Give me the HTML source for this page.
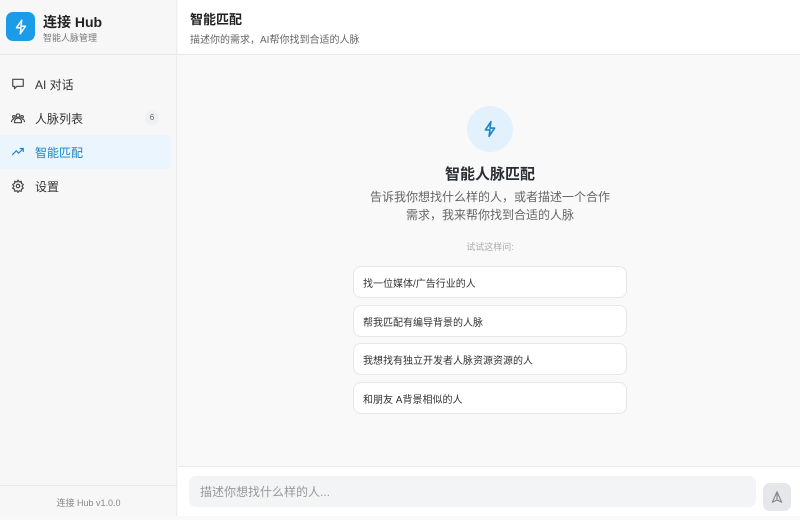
<!DOCTYPE html>
<html><head><meta charset="utf-8"><style>
*{margin:0;padding:0;box-sizing:border-box}
body{width:800px;height:516px;overflow:hidden;font-family:"Liberation Sans","Noto Sans CJK SC",sans-serif;background:#f9f9fa;position:relative;color:#1f2328}
.side{position:absolute;left:0;top:0;width:177px;height:516px;background:#f7f7f8;border-right:1px solid #ececee}
.logo{position:absolute;left:6px;top:12px;width:29px;height:29px;border-radius:7px;background:#1a9ce8;display:flex;align-items:center;justify-content:center}
.brand{position:absolute;left:43px;top:12px;font-size:14px;font-weight:bold;color:#222}
.brandsub{position:absolute;left:43px;top:31px;font-size:9px;color:#777}
.sep{position:absolute;left:0;top:54px;width:800px;height:1px;background:#e8e8ea}
.nav{position:absolute;left:0;width:171px;height:34px;display:flex;align-items:center;font-size:12px;color:#333}
.nav svg{position:absolute;left:11px}
.nav span{position:absolute;left:35px}
.nav.act{background:#eaf5fd;color:#1c86c8}
.badge{position:absolute;left:145px;width:14px;height:14px;border-radius:7px;background:#eef0f2;font-size:8px;color:#666;text-align:center;line-height:14px}
.ver{position:absolute;left:0;top:485px;width:177px;height:31px;border-top:1px solid #e8e8ea;text-align:center;font-size:9px;color:#888;line-height:34px}
.hdr{position:absolute;left:178px;top:0;width:622px;height:54px;background:#fff}
.ht{position:absolute;left:190px;top:9px;font-size:13px;font-weight:bold;color:#222}
.hs{position:absolute;left:190px;top:31px;font-size:10px;color:#666}
.circ{position:absolute;left:467px;top:106px;width:46px;height:46px;border-radius:50%;background:#e3f1fc;display:flex;align-items:center;justify-content:center}
.t1{position:absolute;left:340px;width:300px;text-align:center;top:163px;font-size:15px;font-weight:bold;color:#2a2d31}
.t2{position:absolute;left:365px;width:250px;text-align:center;top:188px;font-size:12px;line-height:18px;color:#666}
.t3{position:absolute;left:340px;width:300px;text-align:center;top:240px;font-size:9px;color:#aaa}
.card{position:absolute;left:353px;width:274px;height:32px;background:#fff;border:1px solid #e6e7e9;border-radius:8px;font-size:10px;color:#333;padding-left:9px;display:flex;align-items:center}
.bottom{position:absolute;left:178px;top:466px;width:622px;height:50px;background:#fff;border-top:1px solid #ececee}
.inp{position:absolute;left:189px;top:476px;width:567px;height:31px;background:#f3f4f6;border-radius:7px;font-size:12px;color:#999;padding-left:11px;display:flex;align-items:center}
.send{position:absolute;left:763px;top:483px;width:28px;height:28px;border-radius:7px;background:#e5e7ea;display:flex;align-items:center;justify-content:center}
</style></head><body>
<div class="side"></div>
<div class="hdr"></div>
<div class="logo"><svg width="18" height="18" viewBox="0 0 24 24" fill="none" stroke="#fff" stroke-width="2" stroke-linejoin="round"><path d="M13 3L6 13H12L11 21L18 11H12Z"/></svg></div>
<div class="brand">连接 Hub</div>
<div class="brandsub">智能人脉管理</div>
<div class="sep"></div>
<div class="nav" style="top:67px"><svg width="14" height="14" viewBox="0 0 24 24" fill="none" stroke="#444" stroke-width="2" stroke-linejoin="round"><path d="M3 4h18v12H10l-4 4v-4H3z"/><path d="M8 10h.01M12 10h.01M16 10h.01"/></svg><span>AI 对话</span></div>
<div class="nav" style="top:101px"><svg width="14" height="14" viewBox="0 0 24 24" fill="none" stroke="#444" stroke-width="2"><circle cx="12" cy="8" r="3"/><circle cx="5" cy="10" r="2.2"/><circle cx="19" cy="10" r="2.2"/><path d="M6 20v-2a6 6 0 0112 0v2zM1 19v-1a4 4 0 014-4M23 19v-1a4 4 0 00-4-4"/></svg><span>人脉列表</span><div class="badge">6</div></div>
<div class="nav act" style="top:135px"><svg width="14" height="14" viewBox="0 0 24 24" fill="none" stroke="#1c86c8" stroke-width="2"><path d="M2 17l7-7 4 4 8-8M15 6h6v6"/></svg><span>智能匹配</span></div>
<div class="nav" style="top:169px"><svg width="14" height="14" viewBox="0 0 24 24" fill="none" stroke="#444" stroke-width="2"><circle cx="12" cy="12" r="3"/><path d="M12 2l2 3 3.5-1 .5 3.5 3 2-2 3 2 3-3 2-.5 3.5-3.5-1-2 3-2-3-3.5 1L6 17.5l-3-2 2-3-2-3 3-2L6.5 4 10 5z"/></svg><span>设置</span></div>
<div class="ver">连接 Hub v1.0.0</div>
<div class="ht">智能匹配</div>
<div class="hs">描述你的需求，AI帮你找到合适的人脉</div>
<div class="circ"><svg width="22" height="22" viewBox="0 0 24 24" fill="none" stroke="#1c86c8" stroke-width="1.8" stroke-linejoin="round"><path d="M13 4L7 13H12L11 20L17 11H12Z"/></svg></div>
<div class="t1">智能人脉匹配</div>
<div class="t2">告诉我你想找什么样的人，或者描述一个合作<br>需求，我来帮你找到合适的人脉</div>
<div class="t3">试试这样问:</div>
<div class="card" style="top:266px">找一位媒体/广告行业的人</div>
<div class="card" style="top:305px">帮我匹配有编导背景的人脉</div>
<div class="card" style="top:343px">我想找有独立开发者人脉资源资源的人</div>
<div class="card" style="top:382px">和朋友 A背景相似的人</div>
<div class="bottom"></div>
<div class="inp">描述你想找什么样的人...</div>
<div class="send"><svg width="14" height="14" viewBox="0 0 24 24" fill="none" stroke="#888" stroke-width="2" stroke-linejoin="round"><path d="M12 3L4 21l8-4 8 4z M12 3v14"/></svg></div>
</body></html>
